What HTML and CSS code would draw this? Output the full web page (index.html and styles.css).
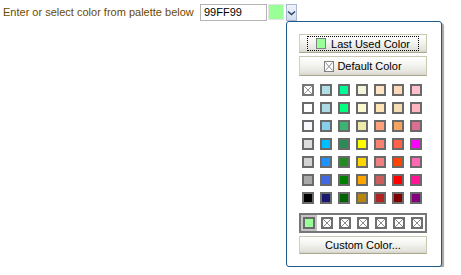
FILE: index.html
```html
<!DOCTYPE html>
<html>
<head>
<meta charset="utf-8">
<link rel="stylesheet" href="styles.css">
</head>
<body>
<div class="picker">
  <div class="row">
    <span class="label">Enter or select color from palette below</span>
    <span class="hex">99FF99</span>
    <span class="preview"></span>
    <span class="drop"><svg width="9" height="6" viewBox="0 0 9 6"><polyline points="1,1.5 4.5,4.5 8,1.5" fill="none" stroke="#2b3f6b" stroke-width="1.4"/></svg></span>
  </div>
  <div class="panel">
    <div class="btn"><span class="focus"><span class="mini green"></span>Last Used Color</span></div>
    <div class="btn btn2"><span class="inner"><svg class="mini-x" width="10" height="11" viewBox="0 0 10 11"><rect x="0.5" y="0.5" width="9" height="10" fill="#fff" stroke="#808080"/><line x1="1.5" y1="1.5" x2="8.5" y2="9.5" stroke="#909090"/><line x1="8.5" y1="1.5" x2="1.5" y2="9.5" stroke="#909090"/></svg>Default Color</span></div>
    <div class="grid">
      <span class="cell"><svg width="12" height="12" viewBox="0 0 12 12"><rect x="1" y="1" width="10" height="10" fill="#fff" stroke="#777" stroke-width="2"/><line x1="2" y1="2" x2="10" y2="10" stroke="#999"/><line x1="10" y1="2" x2="2" y2="10" stroke="#999"/></svg></span>
      <span class="cell"><span class="sw" style="background:#b0e0e6"></span></span>
      <span class="cell"><span class="sw" style="background:#00fa9a"></span></span>
      <span class="cell"><span class="sw" style="background:#f5f5dc"></span></span>
      <span class="cell"><span class="sw" style="background:#ffe4c4"></span></span>
      <span class="cell"><span class="sw" style="background:#ffdab9"></span></span>
      <span class="cell"><span class="sw" style="background:#ffc0cb"></span></span>
      <span class="cell"><span class="sw" style="background:#ffffff"></span></span>
      <span class="cell"><span class="sw" style="background:#add8e6"></span></span>
      <span class="cell"><span class="sw" style="background:#00ff7f"></span></span>
      <span class="cell"><span class="sw" style="background:#fafad2"></span></span>
      <span class="cell"><span class="sw" style="background:#ffe4b5"></span></span>
      <span class="cell"><span class="sw" style="background:#f5deb3"></span></span>
      <span class="cell"><span class="sw" style="background:#ffb6c1"></span></span>
      <span class="cell"><span class="sw" style="background:#f8f8ff"></span></span>
      <span class="cell"><span class="sw" style="background:#87ceeb"></span></span>
      <span class="cell"><span class="sw" style="background:#3cb371"></span></span>
      <span class="cell"><span class="sw" style="background:#eee8aa"></span></span>
      <span class="cell"><span class="sw" style="background:#ffa07a"></span></span>
      <span class="cell"><span class="sw" style="background:#f4a460"></span></span>
      <span class="cell"><span class="sw" style="background:#db7093"></span></span>
      <span class="cell"><span class="sw" style="background:#dcdcdc"></span></span>
      <span class="cell"><span class="sw" style="background:#00bfff"></span></span>
      <span class="cell"><span class="sw" style="background:#2e8b57"></span></span>
      <span class="cell"><span class="sw" style="background:#ffff00"></span></span>
      <span class="cell"><span class="sw" style="background:#fa8072"></span></span>
      <span class="cell"><span class="sw" style="background:#ff6347"></span></span>
      <span class="cell"><span class="sw" style="background:#ff00ff"></span></span>
      <span class="cell"><span class="sw" style="background:#d3d3d3"></span></span>
      <span class="cell"><span class="sw" style="background:#1e90ff"></span></span>
      <span class="cell"><span class="sw" style="background:#228b22"></span></span>
      <span class="cell"><span class="sw" style="background:#ffd700"></span></span>
      <span class="cell"><span class="sw" style="background:#f08080"></span></span>
      <span class="cell"><span class="sw" style="background:#ff4500"></span></span>
      <span class="cell"><span class="sw" style="background:#ff69b4"></span></span>
      <span class="cell"><span class="sw" style="background:#a9a9a9"></span></span>
      <span class="cell"><span class="sw" style="background:#4169e1"></span></span>
      <span class="cell"><span class="sw" style="background:#008000"></span></span>
      <span class="cell"><span class="sw" style="background:#ffa500"></span></span>
      <span class="cell"><span class="sw" style="background:#cd5c5c"></span></span>
      <span class="cell"><span class="sw" style="background:#ff0000"></span></span>
      <span class="cell"><span class="sw" style="background:#ff1493"></span></span>
      <span class="cell"><span class="sw" style="background:#000000"></span></span>
      <span class="cell"><span class="sw" style="background:#191970"></span></span>
      <span class="cell"><span class="sw" style="background:#006400"></span></span>
      <span class="cell"><span class="sw" style="background:#b8860b"></span></span>
      <span class="cell"><span class="sw" style="background:#b22222"></span></span>
      <span class="cell"><span class="sw" style="background:#800000"></span></span>
      <span class="cell"><span class="sw" style="background:#800080"></span></span>
    </div>
    <div class="recent">
      <span class="rcell selected"><span class="sw" style="background:#99ff99"></span></span>
      <span class="rcell"><svg width="12" height="12" viewBox="0 0 12 12"><rect x="1" y="1" width="10" height="10" fill="#fff" stroke="#6f6f6f" stroke-width="2"/><line x1="2" y1="2" x2="10" y2="10" stroke="#888"/><line x1="10" y1="2" x2="2" y2="10" stroke="#888"/></svg></span>
      <span class="rcell"><svg width="12" height="12" viewBox="0 0 12 12"><rect x="1" y="1" width="10" height="10" fill="#fff" stroke="#6f6f6f" stroke-width="2"/><line x1="2" y1="2" x2="10" y2="10" stroke="#888"/><line x1="10" y1="2" x2="2" y2="10" stroke="#888"/></svg></span>
      <span class="rcell"><svg width="12" height="12" viewBox="0 0 12 12"><rect x="1" y="1" width="10" height="10" fill="#fff" stroke="#6f6f6f" stroke-width="2"/><line x1="2" y1="2" x2="10" y2="10" stroke="#888"/><line x1="10" y1="2" x2="2" y2="10" stroke="#888"/></svg></span>
      <span class="rcell"><svg width="12" height="12" viewBox="0 0 12 12"><rect x="1" y="1" width="10" height="10" fill="#fff" stroke="#6f6f6f" stroke-width="2"/><line x1="2" y1="2" x2="10" y2="10" stroke="#888"/><line x1="10" y1="2" x2="2" y2="10" stroke="#888"/></svg></span>
      <span class="rcell"><svg width="12" height="12" viewBox="0 0 12 12"><rect x="1" y="1" width="10" height="10" fill="#fff" stroke="#6f6f6f" stroke-width="2"/><line x1="2" y1="2" x2="10" y2="10" stroke="#888"/><line x1="10" y1="2" x2="2" y2="10" stroke="#888"/></svg></span>
      <span class="rcell"><svg width="12" height="12" viewBox="0 0 12 12"><rect x="1" y="1" width="10" height="10" fill="#fff" stroke="#6f6f6f" stroke-width="2"/><line x1="2" y1="2" x2="10" y2="10" stroke="#888"/><line x1="10" y1="2" x2="2" y2="10" stroke="#888"/></svg></span>
    </div>
    <div class="btn btn3">Custom Color...</div>
  </div>
</div>
</body>
</html>
```

FILE: styles.css
```css
* { box-sizing: border-box; }

html, body {
  margin: 0;
  background: #fff;
}

body {
  padding: 4px 0 0 3px;
  font-family: "Liberation Sans", Arial, sans-serif;
  font-size: 11px;
}

.row {
  display: flex;
  align-items: flex-start;
  height: 17px;
}

.label {
  flex: 0 0 197px;
  color: #6b4a00;
  line-height: 17px;
  white-space: nowrap;
}

.hex {
  width: 67px;
  height: 17px;
  border: 1px solid #b4b4b4;
  padding-left: 3px;
  line-height: 15px;
  color: #000;
}

.preview {
  width: 16px;
  height: 16px;
  margin-left: 1px;
  background: #99ff99;
  border: 1px solid #e4e4e4;
}

.drop {
  width: 11px;
  height: 17px;
  margin-left: 2px;
  border: 1px solid #a9b6cf;
  background: linear-gradient(#eef2fa, #d3dcec);
  display: flex;
  align-items: center;
  justify-content: center;
}

.drop svg { display: block; }

.panel {
  margin-left: 283px;
  width: 156px;
  padding: 12px 14px 12px 12px;
  background: #fff;
  border: 1px solid #1d5a8c;
  border-radius: 3px;
  box-shadow: 2px 2px 1px rgba(0, 0, 0, 0.35);
}

.btn {
  width: 128px;
  height: 19px;
  display: flex;
  align-items: center;
  justify-content: center;
  color: #000;
  background: linear-gradient(#ffffff, #f3f3ef 45%, #e4e3dd 85%, #d6d4cc);
  border: 1px solid #c9c8b0;
  border-bottom-color: #a9a88c;
  border-left-color: #d0d0c8;
  white-space: nowrap;
}

.focus {
  display: flex;
  align-items: center;
  height: 15px;
  padding: 0 8px;
  border: 1px dotted #000;
}

.inner {
  display: flex;
  align-items: center;
}

.btn2 {
  margin-top: 3px;
  height: 20px;
}

.mini {
  display: inline-block;
  width: 10px;
  height: 11px;
  margin-right: 5px;
  border: 1px solid #808080;
}

.mini.green { background: #99ff99; }

.mini-x {
  display: block;
  margin-right: 3px;
}

.grid {
  margin-top: 5px;
  display: grid;
  grid-template-columns: repeat(7, 18px);
  grid-auto-rows: 18px;
}

.cell {
  display: block;
  padding: 3px;
}

.cell svg { display: block; }

.sw {
  display: block;
  width: 12px;
  height: 12px;
  border: 2px solid #6a6a6a;
}

.recent {
  margin-top: 6px;
  width: 128px;
  height: 20px;
  border: 2px solid #777;
  display: flex;
  gap: 2px;
}

.rcell {
  width: 16px;
  height: 16px;
  padding: 2px;
  display: block;
}

.rcell svg { display: block; }

.rcell.selected {
  background: #c4c4c4;
}

.btn3 {
  margin-top: 3px;
  height: 18px;
}
```
